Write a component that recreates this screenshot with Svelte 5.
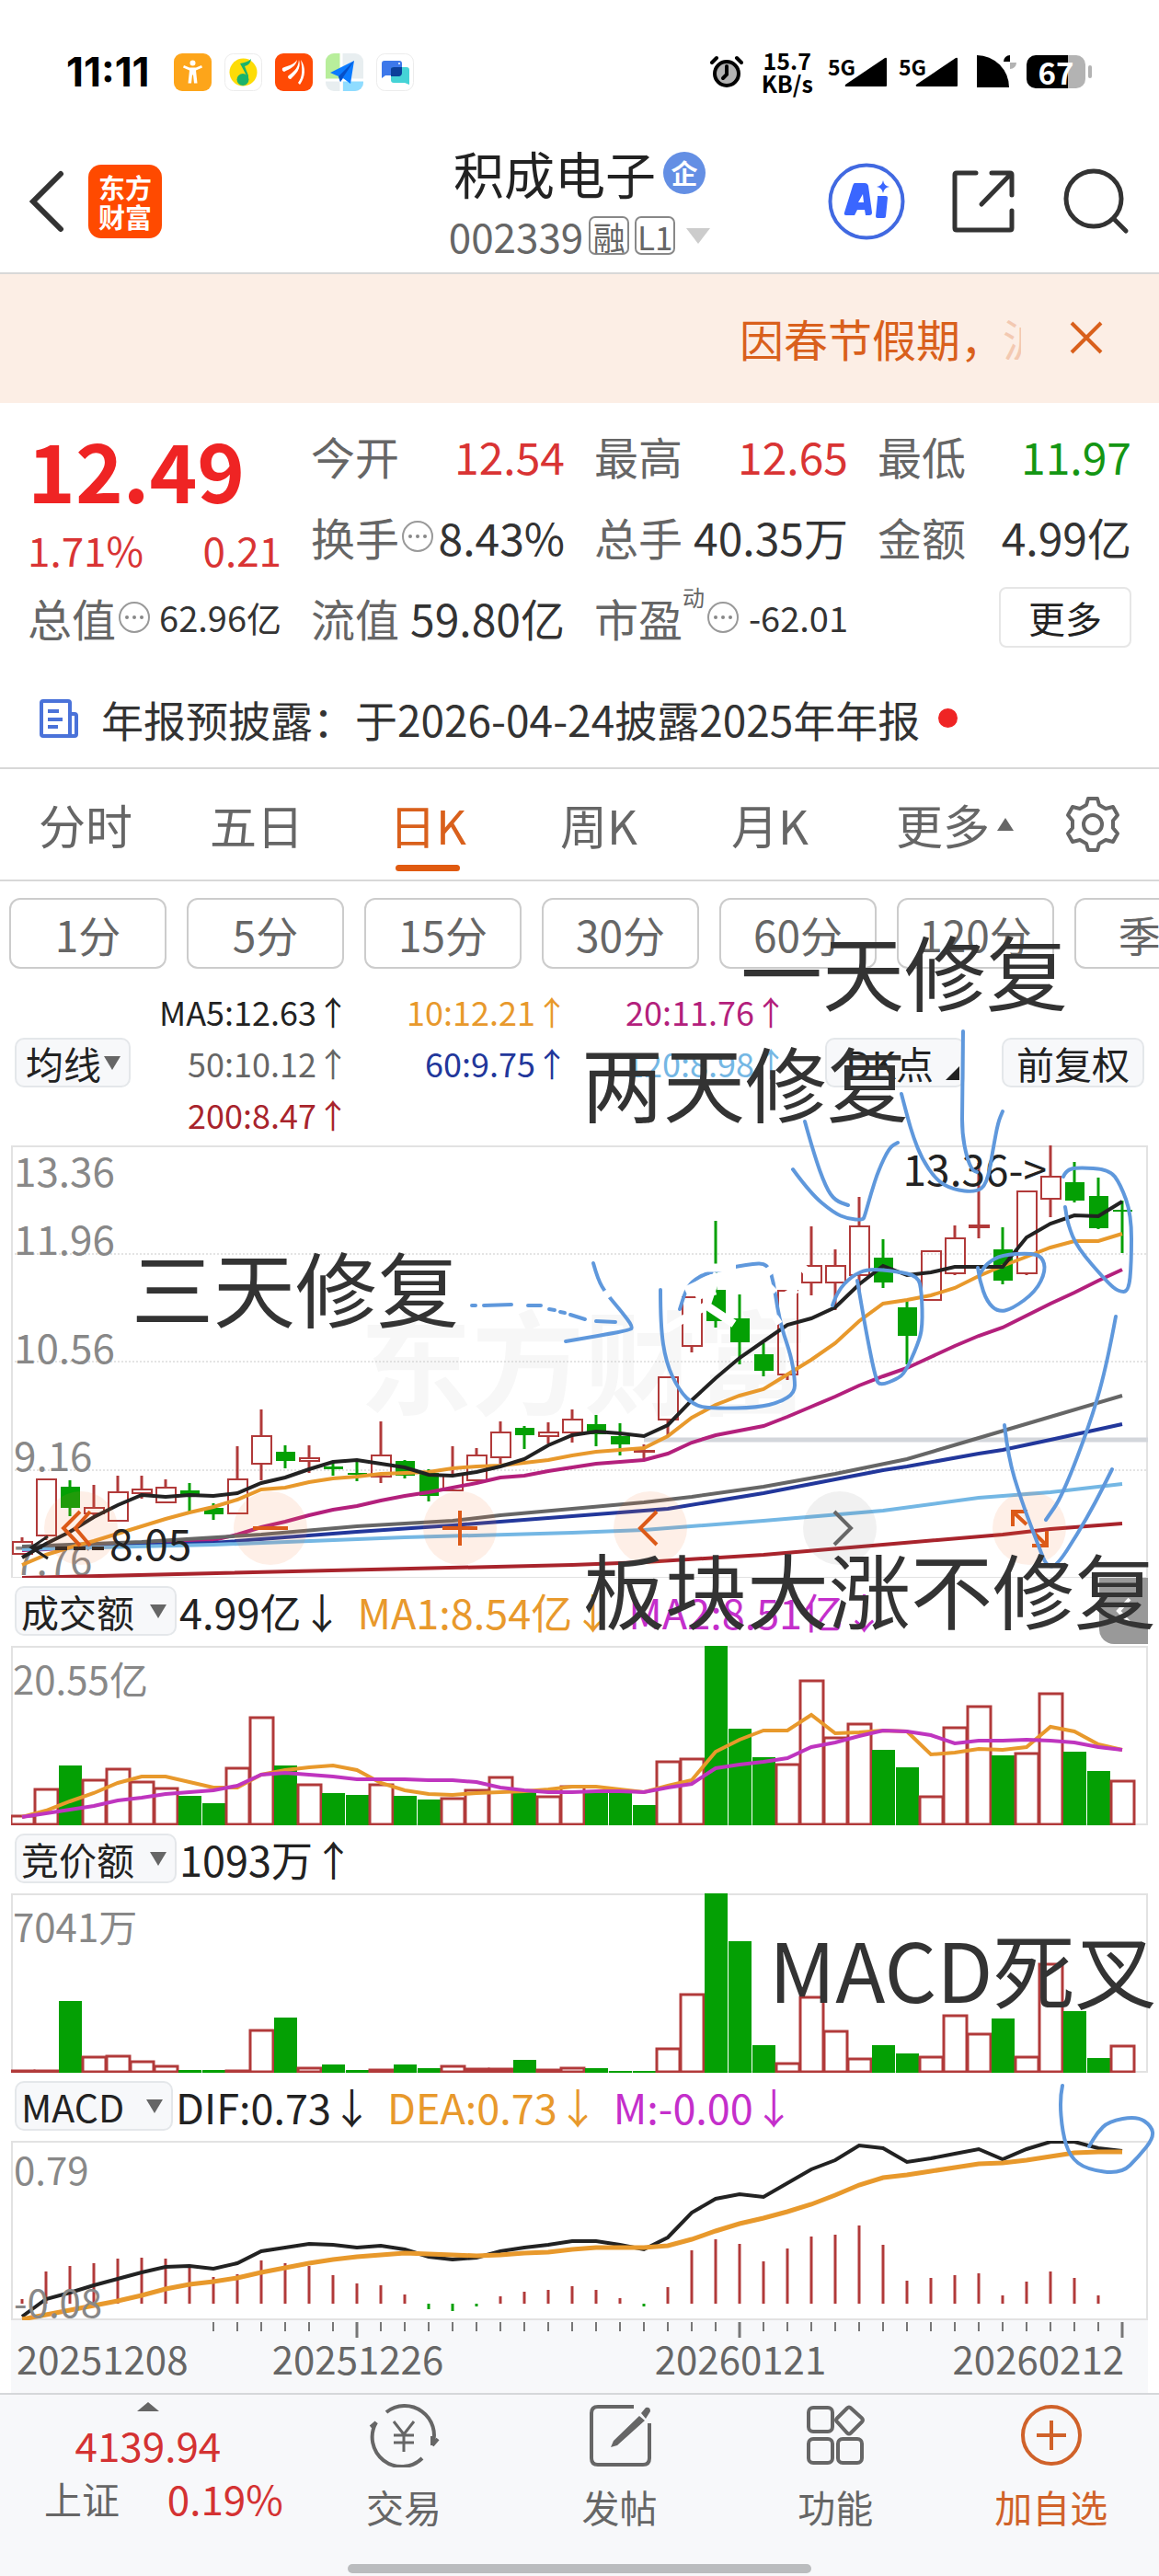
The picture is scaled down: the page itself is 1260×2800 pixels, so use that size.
<script>
  const periods = ['分时', '五日', '日K', '周K', '月K'];
  let period = '日K';

  const minutes = ['1分', '5分', '15分', '30分', '60分', '120分', '季K'];

  const averages = [
    { text: 'MA5:12.63', color: '#222222' },
    { text: '10:12.21', color: '#e8992c' },
    { text: '20:11.76', color: '#b3207c' },
    { text: '50:10.12', color: '#666666' },
    { text: '60:9.75', color: '#22379b' },
    { text: '120:8.98', color: '#74b7e4' },
    { text: '200:8.47', color: '#a8242c' }
  ];

  const STEP = 26;
  const cx = (i) => 12 + i * STEP;

  // [high, body top, body bottom, low, up]
  const candles = [
    [426, 431, 444, 445, 1], [363, 363, 424, 429, 1], [364, 371, 394, 403, 0], [369, 394, 400, 402, 1],
    [359, 377, 408, 408, 1], [359, 374, 378, 384, 1], [363, 372, 388, 388, 1], [367, 375, 382, 398, 0],
    [389, 394, 401, 407, 0], [327, 363, 400, 400, 1], [287, 316, 346, 364, 1], [326, 333, 343, 351, 0],
    [326, 340, 343, 356, 1], [344, 349, 352, 359, 0], [342, 356, 358, 365, 0], [300, 337, 360, 367, 1],
    [342, 343, 359, 362, 0], [352, 356, 381, 387, 0], [327, 358, 375, 375, 1], [329, 337, 364, 364, 1],
    [300, 312, 339, 346, 1], [305, 307, 315, 330, 0], [301, 312, 316, 324, 1], [287, 298, 312, 323, 1],
    [293, 303, 314, 327, 0], [302, 316, 325, 337, 0], [325, 332, 333, 341, 1], [252, 252, 298, 316, 1],
    [165, 165, 218, 225, 1], [82, 157, 191, 198, 0], [162, 188, 214, 238, 0], [215, 227, 245, 251, 0],
    [158, 158, 249, 255, 1], [88, 131, 149, 163, 1], [113, 131, 149, 179, 1], [56, 88, 141, 158, 1],
    [102, 122, 149, 155, 0], [169, 176, 207, 238, 0], [115, 115, 168, 168, 1], [87, 101, 139, 141, 1],
    [19, 87, 89, 101, 1], [89, 113, 147, 151, 0], [50, 50, 139, 141, 1], [0, 34, 58, 78, 1],
    [18, 40, 60, 62, 0], [35, 55, 90, 91, 0], [60, 70, 72, 117, 0]
  ];

  const ma5 = [448, 433, 420, 404, 391, 380, 382, 380, 381, 378, 367, 361, 352, 344, 342, 346, 350, 358, 359, 355, 349, 341, 326, 315, 311, 313, 316, 304, 277, 253, 231, 213, 195, 188, 176, 151, 131, 141, 138, 132, 132, 132, 100, 85, 76, 77, 61];
  const ma10 = [456, 445, 437, 430, 422, 414, 406, 399, 393, 385, 374, 372, 366, 362, 360, 357, 356, 355, 351, 349, 348, 345, 342, 337, 333, 331, 329, 316, 296, 282, 272, 265, 249, 233, 215, 191, 172, 168, 163, 155, 142, 131, 121, 111, 104, 104, 96];
  const ma20 = [440, 439, 437, 436, 435, 434, 433, 431, 429, 423, 415, 409, 402, 396, 392, 386, 381, 377, 372, 367, 361, 359, 354, 350, 346, 344, 342, 335, 323, 315, 310, 305, 295, 284, 273, 261, 251, 242, 230, 218, 207, 198, 185, 172, 160, 147, 135];

  // slow averages are sampled as [index, y]
  const ma50 = [[0, 436], [5, 431], [10, 423], [14, 414], [18, 408], [20, 402], [23, 395], [26, 388], [28, 382], [31, 371], [34, 357], [37, 341], [40, 318], [43, 295], [46, 272]];
  const ma60 = [[0, 439], [8, 432], [14, 420], [18, 413], [23, 403], [27, 395], [31, 378], [34, 363], [36, 353], [37, 349], [40, 335], [41, 331], [43, 320], [46, 303]];
  const ma120 = [[0, 439], [8, 434], [16, 426], [23, 421], [26, 418], [31, 408], [36, 397], [40, 383], [43, 377], [46, 368]];
  const ma200 = [[0, 470], [23, 456], [26, 453], [31, 445], [36, 434], [41, 423], [43, 417], [46, 411]];

  const volumes = [11, 40, 65, 50, 62, 48, 41, 32, 24, 63, 118, 65, 45, 35, 33, 45, 32, 28, 30, 39, 53, 36, 32, 43, 37, 37, 22, 70, 73, 195, 105, 74, 67, 158, 96, 111, 82, 63, 32, 107, 130, 76, 79, 144, 80, 59, 49];
  const bids = [1, 3, 78, 18, 19, 13, 8, 3, 3, 3, 47, 60, 6, 9, 3, 4, 9, 5, 8, 5, 5, 14, 4, 6, 5, 2, 2, 27, 86, 195, 143, 30, 11, 83, 46, 16, 30, 21, 18, 63, 43, 59, 18, 119, 67, 16, 30];
  const falling = [2, 7, 8, 11, 13, 14, 16, 17, 21, 24, 25, 26, 29, 30, 31, 36, 37, 41, 44, 45];

  const volMa1 = [186, 179, 169, 160, 149, 142, 142, 148, 154, 154, 140, 135, 132, 130, 135, 149, 157, 161, 162, 160, 159, 158, 156, 153, 153, 156, 159, 152, 146, 115, 102, 92, 92, 75, 95, 94, 92, 93, 118, 116, 112, 113, 110, 88, 93, 107, 113];
  const volMa2 = [186, 182, 178, 174, 168, 165, 161, 159, 157, 152, 140, 138, 140, 142, 145, 145, 145, 146, 146, 148, 154, 157, 159, 159, 158, 158, 159, 154, 150, 133, 129, 126, 122, 110, 105, 98, 92, 93, 97, 106, 103, 103, 102, 103, 105, 110, 113];

  const macd = [5, 35, 41, 44, 49, 50, 49, 42, 29, 32, 47, 44, 41, 31, 22, 20, 10, -6, -8, -3, 8, 13, 15, 19, 15, 6, -3, 18, 58, 70, 65, 46, 60, 73, 75, 85, 64, 25, 28, 31, 33, 9, 24, 35, 28, 9, 0];
  const dif = [191, 172, 165, 157, 150, 143, 137, 136, 139, 133, 120, 116, 112, 113, 116, 114, 118, 126, 129, 127, 120, 116, 113, 109, 109, 113, 118, 105, 78, 63, 58, 61, 46, 31, 21, 5, 8, 23, 19, 14, 9, 20, 9, 1, 1, 8, 11];
  const dea = [194, 189, 184, 179, 174, 168, 161, 156, 153, 149, 143, 138, 133, 129, 126, 124, 122, 123, 124, 125, 124, 122, 121, 118, 116, 116, 116, 114, 107, 98, 90, 84, 77, 69, 59, 48, 40, 37, 33, 29, 25, 24, 21, 17, 13, 12, 12];

  const line = (ys) => ys.map((y, i) => `${cx(i)},${y}`).join(' ');
  const sampled = (pts) => pts.map(([i, y]) => `${cx(i)},${y}`).join(' ');

  // hand drawn strokes, smoothed through the midpoints
  const strokes = [
    [[1047, 1120], [1046, 1200], [1046, 1231], [1051, 1257], [1057, 1271], [1062, 1273]],
    [[980, 1188], [987, 1215], [993, 1235], [1002, 1258], [1018, 1282], [1036, 1292], [1061, 1295], [1073, 1286], [1080, 1246], [1085, 1219], [1090, 1207]],
    [[875, 1218], [885, 1254], [898, 1290], [908, 1304], [922, 1309]],
    [[862, 1270], [881, 1296], [906, 1317], [922, 1324], [938, 1325], [940, 1321], [947, 1296], [955, 1271], [967, 1246], [976, 1241]],
    [[645, 1372], [650, 1390], [659, 1405], [676, 1425], [688, 1441], [685, 1445], [615, 1457]],
    [[718, 1401], [718, 1440], [724, 1480], [738, 1510], [755, 1527], [776, 1530], [824, 1529], [848, 1523], [864, 1513], [864, 1497], [860, 1473], [850, 1443], [845, 1420], [841, 1393], [835, 1372], [814, 1373], [769, 1382], [752, 1392], [745, 1403], [739, 1422]],
    [[905, 1418], [910, 1403], [926, 1386], [944, 1378], [975, 1381], [998, 1386], [1002, 1403], [1003, 1441], [998, 1460], [984, 1491], [975, 1498], [957, 1505], [952, 1498], [942, 1449], [932, 1391]],
    [[1063, 1377], [1065, 1391], [1073, 1414], [1085, 1425], [1100, 1422], [1126, 1403], [1137, 1380], [1133, 1365], [1120, 1361], [1089, 1363], [1073, 1372], [1065, 1384]],
    [[1156, 1278], [1159, 1271], [1171, 1268], [1206, 1270], [1218, 1286], [1230, 1319], [1230, 1372], [1227, 1403], [1216, 1403], [1204, 1393], [1171, 1355], [1161, 1330], [1158, 1311]],
    [[1213, 1430], [1204, 1479], [1187, 1541], [1155, 1625], [1137, 1651]],
    [[1092, 1548], [1096, 1583], [1110, 1629], [1130, 1682], [1138, 1702], [1149, 1701], [1171, 1667], [1191, 1632], [1209, 1596]],
    [[1155, 2266], [1152, 2280], [1155, 2317], [1163, 2343], [1181, 2357], [1219, 2362], [1238, 2343], [1254, 2323], [1252, 2310], [1236, 2299], [1205, 2305], [1193, 2317], [1184, 2332]]
  ];

  function smooth(p) {
    let d = `M${p[0]}`;
    for (let i = 1; i < p.length - 1; i++) {
      d += `Q${p[i]} ${(p[i][0] + p[i + 1][0]) / 2},${(p[i][1] + p[i + 1][1]) / 2}`;
    }
    return d + `L${p[p.length - 1]}`;
  }

  const notes = [
    { x: 805, y: 1091, text: '一天修复' },
    { x: 632, y: 1212, text: '两天修复' },
    { x: 143, y: 1435, text: '三天修复' },
    { x: 634, y: 1763, text: '板块大涨不修复' },
    { x: 836, y: 2176, text: 'MACD死叉' }
  ];
</script>

{#snippet dots()}
  <svg class="dots" viewBox="0 0 36 36" aria-hidden="true">
    <circle cx="18" cy="18" r="16" fill="none" stroke="#999" stroke-width="2" />
    <circle cx="10" cy="18" r="2" fill="#888" /><circle cx="18" cy="18" r="2" fill="#888" /><circle cx="26" cy="18" r="2" fill="#888" />
  </svg>
{/snippet}

{#snippet bars(list)}
  {#each list as h, i}
    {#if falling.includes(i)}
      <rect x={cx(i) - 12} y={195 - h} width="25" height={h} fill="#04a004" />
    {:else}
      <rect x={cx(i) - 12} y={196 - Math.max(h, 3)} width="25" height={Math.max(h, 3) - 2} fill="#fff" stroke="#b13a3a" stroke-width="3" />
    {/if}
  {/each}
{/snippet}

{#snippet frame(h)}
  <rect x="1" y="1" width="1234" height={h - 2} fill="none" stroke="#e2e2e2" stroke-width="2" />
{/snippet}

<div class="page">
  <div class="status">
    <div class="status-left">
      <span class="clock">11:11</span>
      <svg class="app" viewBox="0 0 41 41"><rect width="41" height="41" rx="9" fill="#fda51a" /><circle cx="20.500" cy="10.500" r="3" fill="#fff" /><path d="M11 13l6 2.500h7l6-2.500 1 2.500-7 3 1.500 14H22l-1-9h-1l-1 9h-3.500L17 18.500l-7-3z" fill="#fff" /></svg>
      <svg class="app" viewBox="0 0 41 41"><rect x=".5" y=".5" width="40" height="40" rx="9" fill="#fff" stroke="#ececec" /><circle cx="20.500" cy="20.500" r="15" fill="#fddc07" /><circle cx="20" cy="28.500" r="6.500" fill="#1bb36b" /><path d="M26 28L17 11c5-1 9-2 12-5-1 5-3 7-7 8l4 10z" fill="#1bb36b" /></svg>
      <svg class="app" viewBox="0 0 41 41"><rect width="41" height="41" rx="9" fill="#ff4a05" /><path d="M8 16c6-3 12-3 16-9-1 7-8 10-14 13-3-1-2-3-2-4zM14 25c5-5 11-7 12-18 3 10-4 16-9 21-2 0-3-1-3-3zM25 32c5-6 5-15 3-25 6 8 5 19-1 27z" fill="#fff" /></svg>
      <svg class="app" viewBox="0 0 41 41"><rect width="41" height="41" rx="9" fill="#e8eef0" /><path d="M0 29V9a9 9 0 0 1 9-9h7v29z" fill="#b8ee9b" /><path d="M19 30h22v2a9 9 0 0 1-9 9H19z" fill="#8fdcff" /><path d="M0 29h41M17 0v41" stroke="#fff" stroke-width="3" /><path d="M31 8L5 21l9 4 2 6 3-4 8 6z" fill="#0b7bff" /><path d="M31 8L14 25l2 6 3-5z" fill="#0750c8" /></svg>
      <svg class="app" viewBox="0 0 41 41"><rect x=".5" y=".5" width="40" height="40" rx="9" fill="#fff" stroke="#ececec" /><path d="M6 27V11q0-3 3-3h16q3 0 3 3v13H10z" fill="#3d78ea" /><path d="M36 34V18q0-3-3-3H19q-3 0-3 3v11q0 3 3 3h12z" fill="#45d3d6" /><path d="M16 25v-8q0-2 3-2h9v6q0 3-3 4z" fill="#0b3f9a" /><circle cx="25" cy="11" r="1" fill="#fff" /></svg>
    </div>
    <div class="status-right">
      <svg width="36" height="36" viewBox="0 0 36 36"><circle cx="18" cy="20" r="13" fill="#b3b3b3" stroke="#000" stroke-width="4" /><path d="M18 12v9l-4 4" fill="none" stroke="#000" stroke-width="4" stroke-linecap="round" /><path d="M2 8l5-5M34 8l-5-5" stroke="#000" stroke-width="4" stroke-linecap="round" /></svg>
      <span class="speed">15.7<br />KB/s</span>
      <span class="sim">5G<svg width="48" height="34" viewBox="0 0 48 34"><path d="M2 31L45 2q2-1 2 1v29q0 1-1 1H3q-2 0-1-2z" /></svg></span>
      <span class="sim">5G<svg width="48" height="34" viewBox="0 0 48 34"><path d="M2 31L45 2q2-1 2 1v29q0 1-1 1H3q-2 0-1-2z" /></svg></span>
      <svg class="wedge" width="44" height="36" viewBox="0 0 44 36"><path d="M0 0a35 35 0 0 1 35 35H0z" /><path d="M29 7a7 7 0 0 1 7-7v7z" /><path d="M36 8h7a7 7 0 0 1-7 7z" fill="#b3b3b3" /></svg>
      <span class="battery"><b>67</b></span>
    </div>
  </div>

  <header class="top">
    <div class="top-side">
      <button class="icon-button" aria-label="返回">
        <svg width="38" height="68" viewBox="0 0 38 68"><path d="M34 4L4 34l30 30" fill="none" stroke="#333" stroke-width="6" stroke-linecap="round" /></svg>
      </button>
      <a class="brand" href="#home">东方<br />财富</a>
    </div>
    <div class="title">
      <h1>积成电子<span class="badge">企</span></h1>
      <p>002339<span class="tag">融</span><span class="tag">L1</span><i class="tri light"></i></p>
    </div>
    <div class="top-side actions">
      <button class="icon-button" aria-label="AI">
        <svg width="84" height="84" viewBox="0 0 84 84"><circle cx="42" cy="42" r="39.500" fill="none" stroke="#4169e1" stroke-width="4" /><path d="M29 22h11q3 0 4 3l4 29q0 3-3 3h-4l-1-6h-8l-3 6h-9q-3 0-2-3l9-29q1-3 2-3zm4 21h6l-1-9z" fill="#3a66ff" /><path d="M56 36h7q2 0 2 2l-2 20q0 2-2 2h-7q-2 0-2-2l2-20q0-2 0-2z" fill="#3a66ff" /><path d="M60 19q1 6 7 7-6 1-7 7-1-6-7-7 6-1 7-7z" fill="#3a66ff" /></svg>
      </button>
      <button class="icon-button" aria-label="分享">
        <svg width="70" height="70" viewBox="0 0 70 70" fill="none" stroke="#333" stroke-width="5" stroke-linecap="round" stroke-linejoin="round"><path d="M27 4H6q-2 0-2 2v58q0 2 2 2h58q2 0 2-2V45M44 4h20q2 0 2 2v22M65 5L33 38" /></svg>
      </button>
      <button class="icon-button" aria-label="搜索">
        <svg width="74" height="74" viewBox="0 0 74 74" fill="none" stroke="#333" stroke-width="5" stroke-linecap="round"><circle cx="35" cy="34" r="30" /><path d="M57 56l13 13" /></svg>
      </button>
    </div>
  </header>

  <div class="banner">
    <span>因春节假期，</span>
    <span class="fade">沪</span>
    <button class="icon-button" aria-label="关闭">
      <svg width="38" height="38" viewBox="0 0 38 38"><path d="M3 3l32 32M35 3L3 35" stroke="#d9601c" stroke-width="4" /></svg>
    </button>
  </div>

  <section class="quote">
    <div class="last">
      <strong>12.49</strong>
      <div><span>1.71%</span><span>0.21</span></div>
    </div>
    <div class="cell"><span>今开</span><b class="red">12.54</b></div>
    <div class="cell"><span>最高</span><b class="red">12.65</b></div>
    <div class="cell"><span>最低</span><b class="green">11.97</b></div>
    <div class="cell"><span>换手{@render dots()}</span><b>8.43%</b></div>
    <div class="cell"><span>总手</span><b>40.35万</b></div>
    <div class="cell"><span>金额</span><b>4.99亿</b></div>
    <div class="cell"><span>总值{@render dots()}</span><b class="small">62.96亿</b></div>
    <div class="cell"><span>流值</span><b>59.80亿</b></div>
    <div class="cell"><span>市盈<sup>动</sup>{@render dots()}</span><b class="small">-62.01</b></div>
    <div class="cell end"><button class="more">更多</button></div>
  </section>

  <a class="news" href="#report">
    <svg width="44" height="44" viewBox="0 0 44 44" fill="none" stroke="#4a72d9" stroke-width="4"><path d="M34 41H5q-2 0-2-2V5q0-2 2-2h27q2 0 2 2v36h5q2 0 2-2V19q0-2-2-2h-4" /><path d="M10 14h12M10 23h16M10 31h11" /></svg>
    <span>年报预披露：于2026-04-24披露2025年年报</span>
    <i></i>
  </a>

  <nav class="tabs">
    {#each periods as name}
      <button class:active={name === period} on:click={() => (period = name)}>{name}</button>
    {/each}
    <button class="other">更多<i class="tri up"></i></button>
    <button aria-label="设置">
      <svg width="62" height="62" viewBox="0 0 62 62" fill="none" stroke="#666" stroke-width="4" stroke-linejoin="round"><path d="M26 3h10l2 7 7 4 8-2 5 9-5 6v8l5 6-5 9-8-2-7 4-2 7H26l-2-7-7-4-8 2-5-9 5-6v-8l-5-6 5-9 8 2 7-4z" /><circle cx="31" cy="31" r="10" /></svg>
    </button>
  </nav>

  <main class="board">
    <div class="chips">
      {#each minutes as m}<button>{m}</button>{/each}
    </div>

    <div class="averages">
      <label class="pick ma"><select aria-label="均线"><option>均线</option></select><i class="tri"></i></label>
      <div class="ma-grid">
        {#each averages as a}<span style:color={a.color}>{a.text}↑</span>{/each}
      </div>
      <button class="mini dk">DK点<i></i></button>
      <button class="mini">前复权</button>
    </div>

    <div class="panel">
      <svg class="chart" viewBox="0 0 1236 470">
        <text class="watermark" x="379" y="283">东方财富</text>
        {#each [118, 235, 353] as y}
          <line x1="0" x2="1236" y1={y} y2={y} stroke="#c9c9c9" stroke-dasharray="2 2" />
        {/each}
        {@render frame(471)}
        <text class="scale" x="3" y="45">13.36</text>
        <text class="scale" x="3" y="119">11.96</text>
        <text class="scale" x="3" y="237">10.56</text>
        <text class="scale" x="3" y="354">9.16</text>
        <text class="scale" x="3" y="467">7.76</text>
        <line x1="688" x2="1236" y1="320" y2="320" stroke="#d3d6db" stroke-width="5" />
        {#each candles as [hi, t, b, lo, up], i}
          {#if up}
            <path d={`M${cx(i)} ${hi}V${t}M${cx(i)} ${b}V${lo}`} stroke="#b13a3a" stroke-width="3" />
            <rect x={cx(i) - 10} y={t} width="21" height={b - t} fill="none" stroke="#b13a3a" stroke-width="2" />
          {:else}
            <line x1={cx(i)} x2={cx(i)} y1={hi} y2={lo} stroke="#04a004" stroke-width="3" />
            <rect x={cx(i) - 10} y={t} width="21" height={b - t} fill="#04a004" />
          {/if}
        {/each}
        <g fill="none" stroke-width="4">
          <polyline points={sampled(ma200)} stroke="#a8242c" />
          <polyline points={line(ma20)} stroke="#b3207c" />
          <polyline points={sampled(ma60)} stroke="#22379b" />
          <polyline points={sampled(ma120)} stroke="#74b7e4" />
          <polyline points={sampled(ma50)} stroke="#666" />
          <polyline points={line(ma10)} stroke="#e8992c" />
          <polyline points={line(ma5)} stroke="#222" />
          <path d="M40 425L22 437l18 12M22 437h12" stroke="#222" stroke-width="3" />
          <path d="M48 438h54" stroke="#222" stroke-dasharray="13 7" />
        </g>
        <text class="mark" x="107" y="451">8.05</text>
        <text class="mark" x="1126" y="44" text-anchor="end">13.36-&gt;</text>
      </svg>
      <div class="tools">
        <button aria-label="最早"><svg viewBox="0 0 80 80"><path d="M39 22L21 40l18 19M50 22L34 40l16 19" /></svg></button>
        <button aria-label="缩小"><svg viewBox="0 0 80 80"><path d="M21 40h38" /></svg></button>
        <button aria-label="放大"><svg viewBox="0 0 80 80"><path d="M21 40h38M40 21v38" /></svg></button>
        <button aria-label="左移"><svg viewBox="0 0 80 80"><path d="M47 22L29 40l18 18" /></svg></button>
        <button class="gray" aria-label="右移"><svg viewBox="0 0 80 80"><path d="M34 22l18 18-18 18" /></svg></button>
        <button aria-label="全屏"><svg viewBox="0 0 80 80"><path d="M22 38V22h16M22 22l15 14M59 43v16H43M59 59L45 45" stroke-width="4" /></svg></button>
      </div>
      <button class="drawer" aria-label="展开"><svg width="20" height="32" viewBox="0 0 20 32"><path d="M16 3L4 16l12 13" fill="none" stroke="#fff" stroke-width="4" /></svg></button>
    </div>

    <div class="legend">
      <label class="pick"><select aria-label="成交额"><option>成交额</option></select><i class="tri"></i></label>
      <span>4.99亿↓</span><span class="orange">MA1:8.54亿↓</span><span class="purple">MA2:8.51亿↓</span>
    </div>
    <div class="panel">
      <svg class="chart" viewBox="0 0 1236 195">
        {@render frame(195)}
        <text class="scale sm" x="2" y="53">20.55亿</text>
        {@render bars(volumes)}
        <polyline points={line(volMa1)} fill="none" stroke="#e8992c" stroke-width="4" />
        <polyline points={line(volMa2)} fill="none" stroke="#bf35bf" stroke-width="4" />
      </svg>
    </div>

    <div class="legend">
      <label class="pick"><select aria-label="竞价额"><option>竞价额</option></select><i class="tri"></i></label>
      <span>1093万↑</span>
    </div>
    <div class="panel">
      <svg class="chart" viewBox="0 0 1236 195">
        {@render frame(195)}
        <text class="scale sm" x="2" y="53">7041万</text>
        {@render bars(bids)}
      </svg>
    </div>

    <div class="legend">
      <label class="pick"><select aria-label="MACD"><option>MACD</option></select><i class="tri"></i></label>
      <span>DIF:0.73↓</span><span class="orange">DEA:0.73↓</span><span class="purple">M:-0.00↓</span>
    </div>
    <div class="panel">
      <svg class="chart" viewBox="0 0 1236 195">
        {@render frame(195)}
        {#each macd as v, i}
          <line x1={cx(i)} x2={cx(i)} y1="177" y2={177 - v} stroke={v < 0 ? '#04a004' : '#b13a3a'} stroke-width="3" />
        {/each}
        <polyline points={line(dif)} fill="none" stroke="#222" stroke-width="4" />
        <polyline points={line(dea)} fill="none" stroke="#e8992c" stroke-width="5" />
        <text class="scale sm" x="3" y="48">0.79</text>
        <text class="scale sm" x="3" y="192">-0.08</text>
      </svg>
    </div>

    <div class="panel axis">
      <svg class="chart" viewBox="0 0 1236 79">
        {#each macd as _, i}
          {#if i >= 8}
            <line x1={cx(i)} x2={cx(i)} y1="2" y2={i % 16 === 14 ? 19 : 12} stroke="#777" stroke-width={i % 16 === 14 ? 3 : 2} />
          {/if}
        {/each}
        <text x="6" y="59">20251208</text>
        <text x="377" y="59" text-anchor="middle">20251226</text>
        <text x="793" y="59" text-anchor="middle">20260121</text>
        <text x="1210" y="59" text-anchor="end">20260212</text>
      </svg>
    </div>

    <svg class="sketch" viewBox="0 957 1260 1644">
      <g fill="none" stroke="#5f98dc" stroke-width="4" stroke-linecap="round">
        {#each strokes as s}<path d={smooth(s)} />{/each}
        <path d="M513 1418h4M526 1418l30-1M574 1418l14 0M597 1422l6 1M609 1425l5 1M620 1428l16 5M648 1435l21 1" />
      </g>
      <path d="M780 1383L768 1418l-44 26M768 1418l30 20M760 1377h40M850 1410l16-10M868 1372l14 14M745 1402l30-14M840 1378l-14 10M848 1432l-6 4M842 1398l-4 4M656 1408l8-5M756 1408l22-6" fill="none" stroke="#fff" stroke-width="9" />
      {#each notes as n}<text x={n.x} y={n.y}>{n.text}</text>{/each}
    </svg>
  </main>

  <footer>
    <div class="index">
      <i class="tri up"></i>
      <b>4139.94</b>
      <div><span>上证</span><b>0.19%</b></div>
    </div>
    <button>
      <svg width="78" height="70" viewBox="0 0 78 70" fill="none" stroke="#666" stroke-width="4"><path d="M20 10A32 32 0 0 1 70 46M59 60A32 32 0 0 1 9 21" /><path d="M70 46l6-7M9 21l-6 5M70 36v10" /><path d="M28 20l11 14 11-14M39 34v19M28 35h22M28 43h22" stroke-width="3" /></svg>
      交易
    </button>
    <button>
      <svg width="78" height="70" viewBox="0 0 78 70"><path d="M54 4H15q-7 0-7 7v49q0 7 7 7h49q7 0 7-7V22" fill="none" stroke="#666" stroke-width="4" /><path d="M60 14l6 5-30 27-7 2 3-7zM62 11l5-6q5-1 5 4l-5 8z" fill="#666" /></svg>
      发帖
    </button>
    <button>
      <svg width="78" height="70" viewBox="0 0 78 70" fill="none" stroke="#666" stroke-width="4"><rect x="10" y="5" width="26" height="26" rx="5" /><rect x="10" y="39" width="26" height="26" rx="5" /><rect x="42" y="39" width="26" height="26" rx="5" /><path d="M52 5.500q2-2 4 0l12 11q2 2 0 4l-12 12q-2 2-4 0l-11-12q-2-2 0-4z" /></svg>
      功能
    </button>
    <button class="add">
      <svg width="78" height="70" viewBox="0 0 78 70" fill="none" stroke="#d0622a" stroke-width="4"><circle cx="39" cy="35" r="31" /><path d="M23 35h32M39 19v32" /></svg>
      加自选
    </button>
    <div class="home"></div>
  </footer>
</div>

<style>
  :global(body) {
    margin: 0;
    background: #fff;
  }

  .page {
    position: relative;
    overflow: hidden;
    font-family: "Noto Sans CJK SC", "Noto Sans", sans-serif;
    font-size: 44px;
    line-height: 1;
    color: #222;
  }

  .page * {
    box-sizing: border-box;
  }

  button, select {
    padding: 0;
    border: 0;
    background: none;
    font: inherit;
    color: inherit;
    white-space: nowrap;
  }

  a {
    color: inherit;
    text-decoration: none;
  }

  svg {
    display: block;
  }

  .status {
    display: flex;
    justify-content: space-between;
    align-items: center;
    height: 156px;
    padding: 0 80px 0 72px;
  }

  .status-left, .status-right {
    display: flex;
    align-items: center;
    color: #000;
  }

  .status-left {
    gap: 14px;
  }

  .clock {
    margin-right: 12px;
    font-family: Inter, sans-serif;
    font-size: 44px;
    font-weight: 700;
  }

  .app {
    width: 41px;
    height: 41px;
  }

  .speed {
    margin: 0 16px 0 20px;
    font-size: 25px;
    line-height: 25px;
    font-weight: 700;
    text-align: center;
  }

  .sim {
    display: flex;
    align-items: flex-start;
    margin-right: 12px;
    font-size: 23px;
    font-weight: 700;
  }

  .sim svg {
    margin-left: -13px;
  }

  .wedge {
    margin: 0 10px 0 8px;
  }

  .battery {
    position: relative;
    display: grid;
    place-items: center;
    width: 64px;
    height: 36px;
    border-radius: 10px;
    background: linear-gradient(90deg, #000 70%, #b3b3b3 70%);
    color: #fff;
    font-size: 33px;
  }

  .battery::after {
    content: "";
    position: absolute;
    right: -7px;
    width: 4px;
    height: 14px;
    border-radius: 2px;
    background: #b3b3b3;
  }

  .top {
    display: flex;
    justify-content: space-between;
    height: 142px;
    padding: 0 32px 14px 32px;
    border-bottom: 2px solid #d8d8d8;
  }

  .top-side {
    display: flex;
    flex: 1;
    align-items: center;
    gap: 26px;
  }

  .actions {
    justify-content: flex-end;
    gap: 50px;
  }

  .brand {
    display: grid;
    place-items: center;
    width: 80px;
    height: 80px;
    border-radius: 14px;
    background: #ff4a00;
    color: #fff;
    font-size: 29px;
    line-height: 32px;
    font-weight: 700;
  }

  .title {
    display: flex;
    flex-direction: column;
    align-items: center;
    gap: 19px;
    padding-top: 4px;
  }

  .title h1, .title p {
    display: flex;
    align-items: center;
    margin: 0;
  }

  .title h1 {
    font-size: 55px;
    font-weight: 400;
  }

  .title p {
    color: #666;
  }

  .badge {
    display: grid;
    place-items: center;
    width: 46px;
    height: 46px;
    margin-left: 8px;
    border-radius: 50%;
    background: #648fe4;
    color: #fff;
    font-size: 29px;
    font-weight: 700;
  }

  .tag {
    display: grid;
    place-items: center;
    width: 44px;
    height: 42px;
    margin-left: 6px;
    border: 2px solid #888;
    border-radius: 7px;
    font-size: 35px;
  }

  .tri {
    width: 0;
    height: 0;
    border: 9px solid transparent;
    border-top: 15px solid #666;
    border-bottom: 0;
  }

  .tri.up {
    border-top: 0;
    border-bottom: 14px solid #666;
  }

  .tri.light {
    margin-left: 12px;
    border-width: 17px 13px 0;
    border-top-color: #ccc;
  }

  .banner {
    display: flex;
    justify-content: flex-end;
    align-items: center;
    height: 140px;
    padding: 0 60px 2px 0;
    background: #fceee5;
    color: #d9601c;
    font-size: 48px;
  }

  .fade {
    width: 20px;
    margin: 0 52px 0 -2px;
    overflow: hidden;
    opacity: 0.25;
  }

  .quote {
    display: grid;
    grid-template-columns: repeat(4, 1fr);
    grid-auto-rows: 88px;
    column-gap: 32px;
    padding: 13px 30px 0;
  }

  .last {
    grid-row: span 2;
    padding-top: 14px;
    color: #ef2424;
  }

  .last strong {
    display: block;
    height: 88px;
    font-size: 88px;
    line-height: 88px;
    font-weight: 700;
  }

  .last div {
    display: flex;
    justify-content: space-between;
    margin-top: 22px;
    color: #d93434;
    font-size: 44px;
  }

  .cell {
    display: flex;
    justify-content: space-between;
    align-items: center;
    font-size: 48px;
  }

  .cell.end {
    justify-content: flex-end;
  }

  .cell span {
    display: flex;
    align-items: center;
    color: #666;
  }

  .cell b {
    font-weight: 400;
    color: #333;
  }

  .cell b.small {
    font-size: 38px;
  }

  .cell b.red {
    color: #d93434;
  }

  .cell b.green {
    color: #149614;
  }

  .cell sup {
    align-self: flex-start;
    font-size: 24px;
    margin-top: -10px;
  }

  .dots {
    width: 36px;
    height: 36px;
    margin-left: 2px;
  }

  .more {
    width: 144px;
    height: 66px;
    border: 2px solid #e6e6e6;
    border-radius: 8px;
    font-size: 40px;
  }

  .news {
    display: flex;
    align-items: center;
    height: 121px;
    padding: 12px 42px 0;
    border-bottom: 2px solid #d8d8d8;
    font-size: 46px;
    color: #333;
  }

  .news span {
    margin-left: 24px;
  }

  .news i {
    width: 21px;
    height: 21px;
    margin-left: 20px;
    border-radius: 50%;
    background: #ef2424;
  }

  .tabs {
    display: grid;
    grid-template-columns: repeat(6, 1fr) 144px;
    height: 122px;
    border-bottom: 2px solid #d8d8d8;
    font-size: 51px;
    color: #666;
  }

  .tabs button {
    position: relative;
    display: flex;
    align-items: center;
    justify-content: center;
    gap: 8px;
  }

  .tabs .other {
    justify-content: flex-end;
    padding-right: 14px;
  }

  .tabs .active {
    color: #d9601c;
  }

  .tabs .active::after {
    content: "";
    position: absolute;
    bottom: 9px;
    width: 70px;
    height: 7px;
    border-radius: 4px;
    background: #e05a10;
  }

  .board {
    position: relative;
  }

  .chips {
    display: flex;
    gap: 22px;
    padding: 18px 0 0 10px;
    overflow: hidden;
  }

  .chips button {
    flex: 0 0 171px;
    height: 77px;
    border: 2px solid #ccc;
    border-radius: 12px;
    color: #666;
    font-size: 46px;
  }

  .averages {
    display: flex;
    align-items: center;
    height: 192px;
    padding: 12px 16px 0;
    color: #222;
  }

  .ma-grid {
    display: grid;
    grid-template-columns: 238px 238px 238px;
    grid-auto-rows: 56px;
    align-items: center;
    justify-items: end;
    font-size: 36px;
  }

  .pick, .mini {
    position: relative;
    display: flex;
    align-items: center;
    flex: none;
    height: 54px;
    border: 2px solid #e4e7ea;
    border-radius: 10px;
    background: #f7f8fa;
    font-size: 41px;
  }

  .pick select {
    flex: 1;
    appearance: none;
    height: 50px;
    padding: 0 44px 0 5px;
    line-height: 50px;
  }

  .pick .tri {
    position: absolute;
    right: 9px;
    pointer-events: none;
  }

  .pick.ma select {
    padding: 0 30px 0 10px;
  }

  .mini {
    margin-left: 40px;
    padding: 0 14px;
  }

  .dk {
    margin-left: auto;
    padding: 0 32px 0 20px;
  }

  .dk i {
    position: absolute;
    right: 4px;
    bottom: 6px;
    border-left: 15px solid transparent;
    border-bottom: 15px solid #222;
  }

  .panel {
    position: relative;
    margin: 0 12px;
  }

  .chart {
    width: 100%;
    height: auto;
  }

  .scale {
    font-size: 44px;
    fill: #888;
  }

  .scale.sm {
    font-size: 42px;
  }

  .mark {
    font-size: 46px;
    fill: #222;
  }

  .watermark {
    font-size: 122px;
    font-weight: 700;
    fill: #f7f7f7;
  }

  .tools {
    position: absolute;
    left: 36px;
    right: 89px;
    bottom: 14px;
    display: flex;
    justify-content: space-between;
  }

  .tools button {
    width: 80px;
    height: 80px;
    border-radius: 50%;
    background: rgba(250, 120, 60, 0.12);
  }

  .tools .gray {
    background: rgba(120, 120, 120, 0.1);
  }

  .tools path {
    fill: none;
    stroke: #dc5a18;
    stroke-width: 4;
  }

  .tools .gray path {
    stroke: #666;
  }

  .drawer {
    position: absolute;
    right: 0;
    top: 100%;
    display: grid;
    place-items: center;
    width: 53px;
    height: 72px;
    border-radius: 0 0 0 16px;
    background: #999;
  }

  .legend {
    display: flex;
    align-items: center;
    gap: 16px;
    height: 74px;
    padding: 0 0 2px 16px;
    font-size: 45px;
    white-space: nowrap;
  }

  .legend .pick {
    min-width: 172px;
    margin-right: -13px;
  }

  .orange {
    color: #e8992c;
  }

  .purple {
    color: #c42fcb;
  }

  .axis {
    background: #f7f8fa;
    font-size: 42px;
    fill: #666;
  }

  .sketch {
    position: absolute;
    inset: 0;
    width: 100%;
    pointer-events: none;
  }

  .sketch text {
    font-size: 89px;
    fill: #333;
  }

  footer {
    position: relative;
    display: grid;
    grid-template-columns: 321fr repeat(4, 234fr);
    height: 199px;
    border-top: 2px solid #d5d7da;
    background: #f7f8fa;
    color: #666;
    font-size: 41px;
  }

  footer button {
    display: flex;
    flex-direction: column;
    align-items: center;
    gap: 22px;
    padding-top: 9px;
  }

  footer .add {
    color: #d0622a;
  }

  .index {
    display: flex;
    flex-direction: column;
    align-items: center;
    gap: 14px;
    padding-top: 8px;
  }

  .index b {
    font-size: 44px;
    font-weight: 400;
    color: #d43232;
  }

  .index div {
    display: flex;
    justify-content: space-between;
    align-items: center;
    align-self: stretch;
    padding: 0 14px 0 48px;
  }

  .index .tri.up {
    border-width: 0 12px 10px;
  }

  .home {
    position: absolute;
    left: 30%;
    right: 30%;
    bottom: 3px;
    height: 10px;
    border-radius: 5px;
    background: #babcbe;
  }
</style>
